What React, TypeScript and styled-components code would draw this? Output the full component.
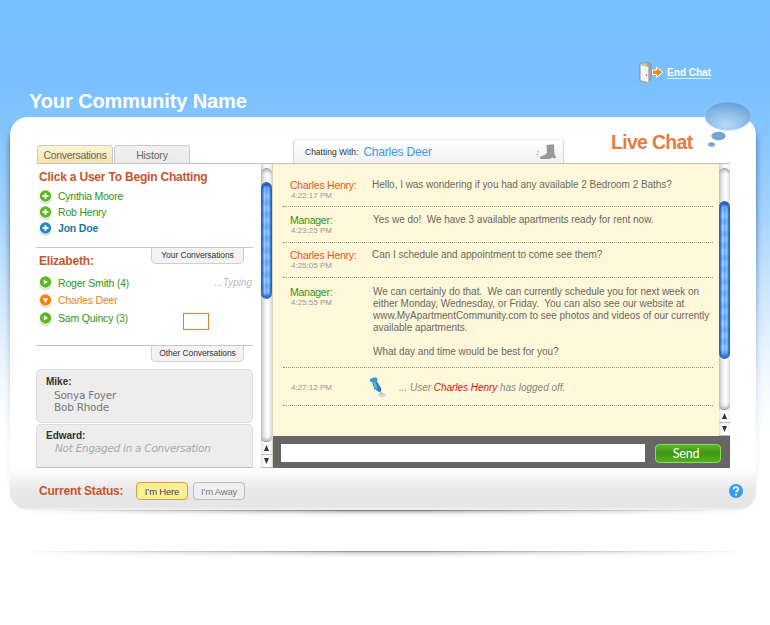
import React from 'react';
import styled, { createGlobalStyle, css } from 'styled-components';

const Global = createGlobalStyle`
  * { box-sizing: border-box; }
  body { margin: 0; background: #fff; font-family: "Liberation Sans", Arial, sans-serif; }
`;

interface TypeProps { $size?: number; $track?: number; $color?: string; $bold?: boolean; $italic?: boolean }
const type = css<TypeProps>`
  font-size: ${p => p.$size ?? 11}px;
  letter-spacing: ${p => p.$track ?? 0}px;
  color: ${p => p.$color ?? '#666'};
  font-weight: ${p => (p.$bold ? 700 : 400)};
  font-style: ${p => (p.$italic ? 'italic' : 'normal')};
  white-space: pre;
`;

const Page = styled.div`
  width: 770px; height: 625px; overflow: hidden;
  display: flex; flex-direction: column;
  background: linear-gradient(#77c0ff 0, #79c0ff 80px, #84c5ff 130px, #a3d3ff 210px, #c8e4ff 280px, #e4f2ff 340px, #f8fcff 400px, #fff 440px);
`;
const Header = styled.header`
  height: 117px; flex: none; display: flex; justify-content: space-between;
  padding: 0 59px 0 29px;
`;
const Title = styled.h1`
  margin: 89px 0 0; font-size: 20px; line-height: 24px; color: #fff; letter-spacing: -0.1px;
  white-space: nowrap;
`;
const EndChat = styled.a`
  display: flex; height: 24px; margin-top: 61px; gap: 3px; color: #fff; text-decoration: none;
`;
const EndLabel = styled.span<TypeProps>`
  ${type}
  box-sizing: content-box; height: 12px; line-height: 13px; margin-top: 5px; border-bottom: 1px solid #d9eeff;
`;

const Panel = styled.main`
  width: 746px; height: 393px; flex: none; margin-left: 10px; position: relative;
  border-radius: 18px; background: #fff;
  display: flex; flex-direction: column;
  &::before {
    content: ''; position: absolute; inset: 8px 0 12px; z-index: -1; border-radius: 18px;
    box-shadow: 0 0 6px rgba(30, 75, 130, 0.75);
    mask-image: linear-gradient(#000 30%, rgba(0,0,0,.35) 65%, rgba(0,0,0,.12) 85%);
    mask-clip: no-clip;
  }
`;
const Stage = styled.div`position: relative; z-index: 0; display: flex; flex-direction: column;`;
const TopBar = styled.div`
  height: 47px; margin: 0 26px 0 27px; display: flex; align-items: flex-end; border-bottom: 1px solid #c2c2c2;
`;
const Tab = styled.button<{ $active?: boolean } & TypeProps>`
  ${type}
  width: 76px; height: 18px; line-height: 19px; padding: 0 0 0 0; margin-right: 1px; font-family: inherit; text-align: center;
  border: 1px solid #c9c9c9; border-bottom: 0; border-radius: 4px 4px 0 0;
  background: ${p => (p.$active ? 'linear-gradient(#fff6cf, #f4e3ae)' : 'linear-gradient(#f2f2f2, #ebebeb)')};
`;
const ChatTab = styled.div`
  width: 271px; height: 24px; margin-left: 102px; padding: 0 6px 0 11px; display: flex; align-items: center;
  border: 1px solid #d2d2d2; border-bottom: 0; border-radius: 4px 4px 0 0; border-top-color: #ececec;
  background: linear-gradient(#fff, #f1f1f1);
`;
const Label = styled.span<TypeProps>`${type}`;
const StatusLabel = styled.span<TypeProps>`${type} width: 97px;`;
const ChatTabName = styled.span<TypeProps>`${type} margin-left: 5px; flex: 1;`;
const LiveChat = styled.h2<TypeProps>`${type} margin: 0 0 0 47px; line-height: 24px; padding-bottom: 9px;`;
const Bubble = styled.svg`position: absolute; left: 692px; top: -17px;`;

const Body = styled.div`height: 304px; display: flex; margin: 0 26px;`;
const Sidebar = styled.aside`width: 217px; margin-right: 8px; display: flex; flex-direction: column; overflow: hidden;`;
const Section = styled.section<{ $h: number }>`height: ${p => p.$h}px; flex: none; border-bottom: 1px solid #c6c6c6; position: relative;`;
const SectionHead = styled.div`height: 26px; display: flex; justify-content: space-between; padding-right: 9px;`;
const Heading = styled.h3<TypeProps & { $h: number }>`
  ${type} margin: 0 0 0 3px; height: ${p => p.$h}px; line-height: 26px;
`;
const UserRow = styled.div<{ $h: number }>`
  height: ${p => p.$h}px; display: flex; align-items: center; padding: 0 1px 0 2px; gap: 5px;
`;
const UserName = styled.span<TypeProps>`${type} flex: 1;`;
const Unread = styled.span`font-size: 10px; letter-spacing: 0;`;
const SectionTag = styled.div<TypeProps>`
  ${type}
  width: 93px; height: 16px; line-height: 14px; flex: none; text-align: center;
  border: 1px solid #cfcfcf; border-top: 0; border-radius: 0 0 5px 5px; background: #f3f3f3;
`;
const LooseTag = styled(SectionTag)`margin: 0 0 7px 115px;`;
const Emphasis = styled.div`position: absolute; left: 147px; top: 65px; width: 26px; height: 17px; border: 1px solid #d9822f;`;
const Agent = styled.div<{ $h: number; $open?: boolean }>`
  height: ${p => p.$h}px; flex: none; margin-bottom: 1px; padding: ${p => (p.$open ? 4 : 5)}px 0 0 9px; background: #ededed;
  border: 1px solid #dcdcdc; border-radius: ${p => (p.$open ? '5px 5px 0 0' : '5px')};
  border-bottom-color: ${p => (p.$open ? '#bbb' : '#dcdcdc')};
`;
const AgentName = styled.div<TypeProps>`${type} line-height: 13px; height: 14px;`;
const AgentUser = styled.div<TypeProps & { $shift?: number }>`
  ${type} font-family: "DejaVu Sans", Verdana, sans-serif; line-height: 12.3px; padding-left: ${p => 8 + (p.$shift ?? 0)}px;
  margin-top: -${p => p.$shift ?? 0}px;
`;

const Bar = styled.div<{ $h: number }>`
  width: 11px; height: ${p => p.$h}px; flex: none; display: flex; flex-direction: column;
  background: linear-gradient(90deg, #c9c9c9, #eee 25%, #fdfdfd 60%, #ececec);
`;
const Track = styled.div<{ $pad: number }>`
  flex: 1; padding-top: ${p => p.$pad}px; margin-top: 4px; border-radius: 6px;
  border: 1px solid #9a9a9a; border-width: 1px 0;
  background: linear-gradient(90deg, #bdbdbd, #e6e6e6 25%, #fff 60%, #e6e6e6);
  box-shadow: inset 0 3px 3px -1px #bbb, inset 0 -3px 3px -1px #bbb;
`;
const Thumb = styled.div<{ $h: number }>`
  height: ${p => p.$h}px; border-radius: 6px; border: 1px solid #2a60ba;
  box-shadow: inset 0 3px 3px #1c50b4, inset 0 -3px 3px #2f6fd0;
  background: repeating-linear-gradient(rgba(255,255,255,.14) 0 3px, rgba(0,60,190,.06) 6px 9px, rgba(255,255,255,.14) 12px),
    linear-gradient(90deg, #3d7fdc, #a8d0fc 25%, #5aa3f5 48%, #8dd0ff 80%, #4a8ae0);
`;
const Arrow = styled.div`
  height: 13px; display: grid; place-items: center; border-bottom: 1px solid #bbb;
  background: linear-gradient(90deg, #e4e4e4, #fff 40%, #fff 70%, #eee);
`;

const Right = styled.div`width: 458px; display: flex; flex-direction: column; border-left: 1px solid #d9d3bf;`;
const ChatRow = styled.div`display: flex; height: 272px;`;
const Log = styled.div`width: 446px; padding: 0 6px 0 10px; background: #fff7da;`;
const Message = styled.article<{ $h: number; $top: number }>`
  height: ${p => p.$h}px; padding: ${p => p.$top}px 0 0 7px; display: flex;
  border-bottom: 1px dotted #938d7a;
`;
const Notice = styled.div`
  height: 38px; padding: 2px 0 0 7px; display: flex; align-items: center; border-bottom: 1px dotted #938d7a;
`;
const Pin = styled.svg`margin: 0 12px 0 37px; flex: none;`;
const Meta = styled.div`width: 82px; display: flex; flex-direction: column;`;
const Sender = styled.div<TypeProps>`${type} line-height: 12px; height: 12px;`;
const Time = styled.div<TypeProps>`${type} line-height: 10px; width: 42px; padding-left: 1px;`;
const Copy = styled.div<TypeProps & { $inset?: number }>`${type} line-height: 12px; padding-left: ${p => p.$inset ?? 0}px;`;
const Departed = styled.span`color: #e01212;`;
const Composer = styled.form`
  height: 32px; background: #666; display: flex; padding: 8px 9px 0 8px; justify-content: space-between;
`;
const Field = styled.input`width: 364px; height: 18px; border: 0; padding: 0 4px; background: #fff;`;
const Send = styled.button`
  width: 66px; height: 19px; padding: 0 4px 0 0; border: 1px solid #8fdc5f; border-radius: 4px; color: #fff;
  font: 12.5px/16px "Lato", sans-serif; letter-spacing: -0.2px; background: linear-gradient(#5fb52a, #3d9a12 45%, #53ae20);
`;

const Footer = styled.footer`
  height: 42px; padding: 4px 13px 0 29px; display: flex; align-items: center; border-radius: 0 0 18px 18px;
  background: linear-gradient(#fff, #fafafa 12%, #e9e9e9 50%, #e6e6e6 92%, #f2f2f2);
`;
const StatusButton = styled.button<{ $on?: boolean } & TypeProps>`
  ${type}
  width: 52px; height: 18px; line-height: 15px; padding: 0; margin-right: 5px; border-radius: 4px; font-family: inherit;
  border: 1px solid ${p => (p.$on ? '#e39a3a' : '#bdbdbd')};
  background: ${p => (p.$on ? '#fff098' : '#efefef')};
`;
const Help = styled.svg`margin-left: auto;`;
const EdgeShadow = styled.div<{ $gap: number; $dark: number }>`
  height: 7px; flex: none; margin: ${p => p.$gap}px 20px 0;
  background: linear-gradient(rgba(0,0,0,${p => p.$dark}) 0 1px, rgba(0,0,0,${p => p.$dark * 0.55}) 1px, rgba(0,0,0,.06) 4px, transparent);
  mask-image: linear-gradient(90deg, transparent, rgba(0,0,0,.35) 15%, #000 45%, #000 55%, rgba(0,0,0,.35) 85%, transparent);
`;

const Badge = ({ kind }: { kind: 'plus' | 'blue' | 'play' | 'down' }) => {
  const color = { plus: '#5cb81f', blue: '#2089bd', play: '#5cb81f', down: '#ee8414' }[kind];
  return (
    <svg width="15" height="15" viewBox="0 0 15 15">
      <circle cx="7.6" cy="8" r="6.8" fill="#c9c9c9" />
      <circle cx="7.5" cy="7" r="6.7" fill="#fff" />
      <circle cx="7.5" cy="7" r="5.7" fill={color} />
      {(kind === 'plus' || kind === 'blue') && <path d="M7.5 4v6M4.5 7h6" stroke="#fff" strokeWidth="1.8" />}
      {kind === 'play' && <path d="M5.8 4.4l4.2 2.6-4.2 2.6z" fill="#fff" />}
      {kind === 'down' && <path d="M4.8 5.2h5.4L7.5 9.7z" fill="#fff" />}
    </svg>
  );
};

const Scrollbar = ({ height, pad, thumb }: { height: number; pad: number; thumb: number }) => (
  <Bar $h={height}>
    <Track $pad={pad}><Thumb $h={thumb} /></Track>
    <Arrow><svg width="5" height="6"><path d="M2.5 0L5 6H0z" fill="#333" /></svg></Arrow>
    <Arrow><svg width="5" height="6"><path d="M2.5 6L5 0H0z" fill="#333" /></svg></Arrow>
  </Bar>
);

const messages = [
  { who: 'Charles Henry:', mgr: false, time: '4:22:17 PM', h: 43, top: 15, lines: ['Hello, I was wondering if you had any available 2 Bedroom 2 Baths?'] },
  { who: 'Manager:', mgr: true, time: '4:23:25 PM', h: 36, top: 7, lines: ['Yes we do!  We have 3 available apartments ready for rent now.'] },
  { who: 'Charles Henry:', mgr: false, time: '4:25:05 PM', h: 35, top: 6, lines: ['Can I schedule and appointment to come see them?'] },
  { who: 'Manager:', mgr: true, time: '4:25:55 PM', h: 90, top: 8, lines: [
    'We can certainly do that.  We can currently schedule you for next week on',
    'either Monday, Wednesday, or Friday.  You can also see our website at',
    'www.MyApartmentCommunity.com to see photos and videos of our currently',
    'available apartments.', '', 'What day and time would be best for you?'] },
];

const GREEN = '#2f9410';
const RUST = '#c9542c';

export default function App() {
  return (
    <Page>
      <Global />
      <Header>
        <Title>Your Community Name</Title>
        <EndChat>
          <svg width="26" height="23" viewBox="0 0 26 23">
            <path d="M1 2l9-1 4 2v16l-6 3-7-2z" fill="#a39d95" />
            <path d="M2 3l7-1v17l-7-1z" fill="#c9c6c0" />
            <path d="M2.500 4l8 1.500v16l-8-2z" fill="#f6f6f6" stroke="#aaa" strokeWidth=".5" />
            <circle cx="8.500" cy="14" r=".8" fill="#666" />
            <path d="M14.500 9h4V6.200l6.300 5.100-6.300 5v-2.800h-4z" fill="#f08a10" stroke="#fff" strokeWidth="1" />
          </svg>
          <EndLabel $size={10} $bold $color="#fff">End Chat</EndLabel>
        </EndChat>
      </Header>
      <Stage>
        <Panel>
          <TopBar>
            <Tab $active $size={10.5} $track={-0.3}>Conversations</Tab>
            <Tab $size={10.5} $track={-0.15}>History</Tab>
            <ChatTab>
              <Label $size={8.5} $color="#333">Chatting With:</Label>
              <ChatTabName $size={12} $track={-0.2} $color="#3b98e6">Charles Deer</ChatTabName>
              <svg width="22" height="16" viewBox="0 0 22 16">
                <path d="M11.500 1l7.500-.7.3 9 1.900 4.700-2.400.6-1.300-1.100-3 1.600H5.500l-.7-1.800c2-1.600 5-1.600 7.200-4.300z" fill="#999" />
                <path d="M2 7l2 1M1 10.500h2.500M2 13.500l1.500-1" stroke="#bbb" />
              </svg>
            </ChatTab>
            <LiveChat $size={19.5} $bold $color="#e57b47" $track={-0.7}>Live Chat</LiveChat>
          </TopBar>
          <Bubble width="52" height="48" viewBox="0 0 52 48">
            <defs>
              <radialGradient id="cloud" cx=".45" cy=".8" r=".75">
                <stop offset="0" stopColor="#b9d9f7" /><stop offset=".5" stopColor="#94c0ea" /><stop offset="1" stopColor="#6aa2d8" />
              </radialGradient>
            </defs>
            <ellipse cx="26" cy="16" rx="23" ry="14.200" fill="url(#cloud)" stroke="#a3c9ea" strokeWidth=".6" />
            <ellipse cx="16.500" cy="36" rx="7.200" ry="4.200" fill="#76a5cf" />
            <ellipse cx="9.500" cy="44.500" rx="3.500" ry="2.200" fill="#76a5cf" />
          </Bubble>
          <Body>
            <Sidebar>
              <Section $h={84}>
                <Heading $h={24} $size={12} $track={-0.2} $bold $color={RUST}>Click a User To Begin Chatting</Heading>
                <UserRow $h={16}><Badge kind="plus" /><UserName $size={10.5} $track={-0.25} $color={GREEN}>Cynthia Moore</UserName></UserRow>
                <UserRow $h={16}><Badge kind="plus" /><UserName $size={10.5} $track={-0.2} $color={GREEN}>Rob Henry</UserName></UserRow>
                <UserRow $h={16}><Badge kind="blue" /><UserName $size={10.5} $track={-0.2} $bold $color="#1a78a8">Jon Doe</UserName></UserRow>
              </Section>
              <Section $h={98}>
                <SectionHead>
                  <Heading $h={26} $size={12} $track={-0.2} $bold $color={RUST}>Elizabeth:</Heading>
                  <SectionTag $size={8.5} $track={-0.08} $color="#333">Your Conversations</SectionTag>
                </SectionHead>
                <UserRow $h={17}>
                  <Badge kind="play" /><UserName $size={10.5} $track={-0.2} $color={GREEN}>Roger Smith <Unread>(4)</Unread></UserName>
                  <Label $size={10} $italic $color="#bbb">...Typing</Label>
                </UserRow>
                <UserRow $h={18}><Badge kind="down" /><UserName $size={10.5} $track={-0.2} $color="#ee8414">Charles Deer</UserName></UserRow>
                <UserRow $h={18}><Badge kind="play" /><UserName $size={10.5} $track={-0.2} $color={GREEN}>Sam Quincy <Unread>(3)</Unread></UserName></UserRow>
                <Emphasis />
              </Section>
              <LooseTag $size={8.5} $track={-0.08} $color="#333">Other Conversations</LooseTag>
              <Agent $h={54}>
                <AgentName $size={10} $bold $color="#333">Mike:</AgentName>
                <AgentUser $size={10.5} $track={-0.25} $color="#777">Sonya Foyer</AgentUser>
                <AgentUser $size={10.5} $track={-0.25} $color="#777">Bob Rhode</AgentUser>
              </Agent>
              <Agent $h={44} $open>
                <AgentName $size={10} $bold $color="#333">Edward:</AgentName>
                <AgentUser $size={10.5} $track={-0.27} $shift={1} $italic $color="#aaa">Not Engaged in a Conversation</AgentUser>
              </Agent>
            </Sidebar>
            <Scrollbar height={304} pad={13} thumb={117} />
            <Right>
              <ChatRow>
                <Log>
                  {messages.map(m => (
                    <Message key={m.time} $h={m.h} $top={m.top}>
                      <Meta>
                        <Sender $size={10.5} $track={-0.25} $color={m.mgr ? GREEN : '#e2571e'}>{m.who}</Sender>
                        <Time $size={8} $color="#999">{m.time}</Time>
                      </Meta>
                      <Copy $size={10} $track={-0.03} $inset={m.mgr ? 1 : 0} $color="#6b675c">{m.lines.join('\n')}</Copy>
                    </Message>
                  ))}
                  <Notice>
                    <Time $size={8} $color="#999">4:27:12 PM</Time>
                    <Pin width="18" height="21" viewBox="0 0 18 21">
                      <ellipse cx="13" cy="18" rx="4" ry="2" fill="#d3d9de" />
                      <path d="M10.500 13.500l2.800 4" stroke="#8b979e" strokeWidth="1" />
                      <path d="M3 4l4-1 5 8 .3 3-2.300 1-5-3.500z" fill="#2382b8" />
                      <path d="M4 4.500l2-.5 3 8-3.500-1z" fill="#62b2dc" />
                      <ellipse cx="4.700" cy="2.900" rx="4" ry="2.100" fill="#3a9acc" transform="rotate(-12 4.700 2.900)" />
                    </Pin>
                    <Copy $size={10} $track={-0.03} $italic $color="#8b877b">... User <Departed>Charles Henry</Departed> has logged off.</Copy>
                  </Notice>
                </Log>
                <Scrollbar height={272} pad={32} thumb={158} />
              </ChatRow>
              <Composer><Field aria-label="Message" /><Send type="button">Send</Send></Composer>
            </Right>
          </Body>
          <Footer>
            <StatusLabel $size={12} $track={-0.2} $bold $color={RUST}>Current Status:</StatusLabel>
            <StatusButton $on $size={9.5} $track={-0.2} $color="#444">I’m Here</StatusButton>
            <StatusButton $size={9.5} $track={-0.2} $color="#777">I’m Away</StatusButton>
            <Help width="14" height="14" viewBox="0 0 14 14">
              <circle cx="7" cy="7" r="7" fill="#309cf5" />
              <path d="M4.700 5.200c.2-3 4.800-2.500 4.600.1-.1 1.500-2.200 1.500-2.200 3M7.100 9.700v1.700" stroke="#fff" strokeWidth="1.700" fill="none" />
            </Help>
          </Footer>
        </Panel>
      </Stage>
      <EdgeShadow $gap={0} $dark={0.5} />
      <EdgeShadow $gap={34} $dark={0.4} />
    </Page>
  );
}
